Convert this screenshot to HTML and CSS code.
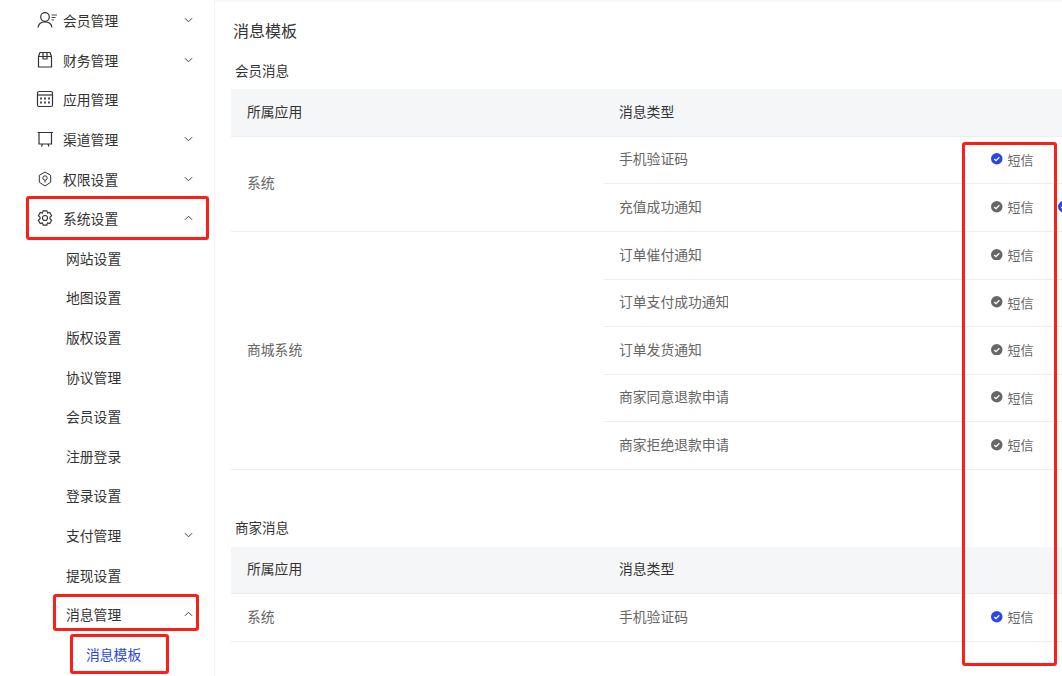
FILE: index.html
```html
<!doctype html>
<html lang="zh-CN">
<head>
    <meta charset="UTF-8">
    <title>消息模板</title>
    <link rel="stylesheet" href="styles.css">
</head>
<body>
    <div class="page">
        <!-- Sidebar -->
        <aside class="sidebar">
            <div class="menu-item">
                <svg class="menu-icon" viewBox="0 0 20 20"><circle cx="9" cy="7" r="4.300"/><path d="M2 17.500c.5-3.500 3.200-5.700 7-5.700s6.500 2.200 7 5.700"/><path class="thin" d="M15.500 5h5.500M15.500 7.500h4M15.500 10h2.500"/></svg>
                <span class="menu-text">会员管理</span>
                <svg class="chevron" viewBox="0 0 10 6"><path d="M1 1l4 4 4-4"/></svg>
            </div>
            <div class="menu-item">
                <svg class="menu-icon" viewBox="0 0 20 20"><path d="M2.500 6.500h13v10.500h-13zM2.500 6.500l1.500-4h10l1.500 4"/><path d="M7 2.500v6.500h4V2.500"/></svg>
                <span class="menu-text">财务管理</span>
                <svg class="chevron" viewBox="0 0 10 6"><path d="M1 1l4 4 4-4"/></svg>
            </div>
            <div class="menu-item">
                <svg class="menu-icon" viewBox="0 0 20 20"><rect x="1.500" y="2.500" width="15" height="15" rx="1.500"/><path d="M1.500 6h15"/><path class="dots" d="M4 9.500h2M8 9.500h2M12 9.500h2M4 13.500h2M8 13.500h2M12 13.500h2"/></svg>
                <span class="menu-text">应用管理</span>
            </div>
            <div class="menu-item">
                <svg class="menu-icon" viewBox="0 0 20 20"><path d="M1.500 3.500h15.500M3 3.500v11.500h12.500V3.500M6.500 15l-1 2.500M12 15l1 2.500"/></svg>
                <span class="menu-text">渠道管理</span>
                <svg class="chevron" viewBox="0 0 10 6"><path d="M1 1l4 4 4-4"/></svg>
            </div>
            <div class="menu-item">
                <svg class="menu-icon thin-icon" viewBox="0 0 20 20"><path d="M9 3l5.700 3.300v6.900L9 17l-5.700-3.800V6.300z"/><circle cx="9" cy="9" r="2.200"/><path d="M9 11.200v2.300"/></svg>
                <span class="menu-text">权限设置</span>
                <svg class="chevron" viewBox="0 0 10 6"><path d="M1 1l4 4 4-4"/></svg>
            </div>
            <div class="menu-item">
                <svg class="menu-icon thin-icon" viewBox="0 0 20 20"><g transform="translate(9 10) scale(1.100) translate(-10 -9.500)"><path d="M8.300 3h3.400l.6 2 2-.6 1.700 3-1.500 1.400v1.400l1.500 1.400-1.700 3-2-.6-.6 2H8.300l-.6-2-2 .6-1.700-3 1.500-1.400V8.800L4 7.400l1.700-3 2 .6z"/><circle cx="10" cy="9.500" r="2.300"/></g></svg>
                <span class="menu-text">系统设置</span>
                <svg class="chevron" viewBox="0 0 10 6"><path d="M1 5l4-4 4 4"/></svg>
            </div>
            <div class="menu-item sub"><span class="menu-text">网站设置</span></div>
            <div class="menu-item sub"><span class="menu-text">地图设置</span></div>
            <div class="menu-item sub"><span class="menu-text">版权设置</span></div>
            <div class="menu-item sub"><span class="menu-text">协议管理</span></div>
            <div class="menu-item sub"><span class="menu-text">会员设置</span></div>
            <div class="menu-item sub"><span class="menu-text">注册登录</span></div>
            <div class="menu-item sub"><span class="menu-text">登录设置</span></div>
            <div class="menu-item sub">
                <span class="menu-text">支付管理</span>
                <svg class="chevron" viewBox="0 0 10 6"><path d="M1 1l4 4 4-4"/></svg>
            </div>
            <div class="menu-item sub"><span class="menu-text">提现设置</span></div>
            <div class="menu-item sub">
                <span class="menu-text">消息管理</span>
                <svg class="chevron" viewBox="0 0 10 6"><path d="M1 5l4-4 4 4"/></svg>
            </div>
            <div class="menu-item sub-sub active"><span class="menu-text">消息模板</span></div>
        </aside>

        <!-- Main Content -->
        <main class="content">
            <h1 class="page-title">消息模板</h1>

            <h2 class="section-title">会员消息</h2>
            <div class="table">
                <div class="table-head">
                    <div class="col-app">所属应用</div>
                    <div class="col-type">消息类型</div>
                </div>
                <div class="table-group">
                    <div class="col-app">系统</div>
                    <div class="group-rows">
                        <div class="row">
                            <div class="row-name">手机验证码</div>
                            <div class="channel on">
                                <svg class="check" viewBox="0 0 12 12"><circle cx="6" cy="6" r="6"/><path d="M3.300 6.300l1.900 1.600 3.500-3.500"/></svg>
                                短信
                            </div>
                        </div>
                        <div class="row">
                            <div class="row-name">充值成功通知</div>
                            <div class="channel">
                                <svg class="check" viewBox="0 0 12 12"><circle cx="6" cy="6" r="6"/><path d="M3.300 6.300l1.900 1.600 3.500-3.500"/></svg>
                                短信
                            </div>
                            <div class="channel on">
                                <svg class="check" viewBox="0 0 12 12"><circle cx="6" cy="6" r="6"/><path d="M3.300 6.300l1.900 1.600 3.500-3.500"/></svg>
                            </div>
                        </div>
                    </div>
                </div>
                <div class="table-group">
                    <div class="col-app">商城系统</div>
                    <div class="group-rows">
                        <div class="row">
                            <div class="row-name">订单催付通知</div>
                            <div class="channel">
                                <svg class="check" viewBox="0 0 12 12"><circle cx="6" cy="6" r="6"/><path d="M3.300 6.300l1.900 1.600 3.500-3.500"/></svg>
                                短信
                            </div>
                        </div>
                        <div class="row">
                            <div class="row-name">订单支付成功通知</div>
                            <div class="channel">
                                <svg class="check" viewBox="0 0 12 12"><circle cx="6" cy="6" r="6"/><path d="M3.300 6.300l1.900 1.600 3.500-3.500"/></svg>
                                短信
                            </div>
                        </div>
                        <div class="row">
                            <div class="row-name">订单发货通知</div>
                            <div class="channel">
                                <svg class="check" viewBox="0 0 12 12"><circle cx="6" cy="6" r="6"/><path d="M3.300 6.300l1.900 1.600 3.500-3.500"/></svg>
                                短信
                            </div>
                        </div>
                        <div class="row">
                            <div class="row-name">商家同意退款申请</div>
                            <div class="channel">
                                <svg class="check" viewBox="0 0 12 12"><circle cx="6" cy="6" r="6"/><path d="M3.300 6.300l1.900 1.600 3.500-3.500"/></svg>
                                短信
                            </div>
                        </div>
                        <div class="row">
                            <div class="row-name">商家拒绝退款申请</div>
                            <div class="channel">
                                <svg class="check" viewBox="0 0 12 12"><circle cx="6" cy="6" r="6"/><path d="M3.300 6.300l1.900 1.600 3.500-3.500"/></svg>
                                短信
                            </div>
                        </div>
                    </div>
                </div>
            </div>

            <h2 class="section-title second">商家消息</h2>
            <div class="table">
                <div class="table-head">
                    <div class="col-app">所属应用</div>
                    <div class="col-type">消息类型</div>
                </div>
                <div class="table-group">
                    <div class="col-app">系统</div>
                    <div class="group-rows">
                        <div class="row">
                            <div class="row-name">手机验证码</div>
                            <div class="channel on">
                                <svg class="check" viewBox="0 0 12 12"><circle cx="6" cy="6" r="6"/><path d="M3.300 6.300l1.900 1.600 3.500-3.500"/></svg>
                                短信
                            </div>
                        </div>
                    </div>
                </div>
            </div>
        </main>

        <!-- Red annotation boxes drawn over the screenshot -->
        <div class="mark mark-system"></div>
        <div class="mark mark-message"></div>
        <div class="mark mark-template"></div>
        <div class="mark mark-channels"></div>
    </div>
</body>
</html>
```

FILE: styles.css
```css
* {
    margin: 0;
    padding: 0;
    box-sizing: border-box;
}

html, body {
    height: 100%;
    overflow: hidden;
}

body {
    font-family: "Noto Sans CJK SC", "Liberation Sans", sans-serif;
    background-color: #fff;
    color: #333;
    font-size: 13.8px;
}

.page {
    position: relative;
    display: flex;
    width: 1062px;
    height: 676px;
    overflow: hidden;
}

/* Sidebar */
.sidebar {
    flex: none;
    width: 215px;
    padding-top: 0.5px;
    border-right: 1px solid #f0f3f8;
}

.menu-item {
    display: flex;
    align-items: center;
    height: 39.6px;
    padding-left: 36px;
    padding-right: 21px;
    color: #333;
}

.menu-icon {
    flex: none;
    width: 20px;
    height: 20px;
    margin-right: 7px;
    overflow: visible;
    fill: none;
    stroke: #333;
    stroke-width: 1.2;
}

.thin-icon {
    stroke-width: 1;
}

.menu-icon .thin {
    stroke-width: 0.9;
}

.menu-icon .dots {
    stroke: #4a4a6a;
    stroke-width: 2;
}

.menu-text {
    flex: 1;
}

.chevron {
    flex: none;
    width: 9px;
    height: 6px;
    fill: none;
    stroke: #444;
    stroke-width: 1.1;
}

.sub {
    padding-left: 66px;
}

.sub-sub {
    padding-left: 86px;
}

.active {
    color: #2a46e8;
}

/* Main content */
.content {
    flex: none;
    width: 847px;
    padding: 0 0 0 16px;
    border-top: 2px solid #f5f8fb;
}

.page-title {
    padding-left: 2px;
    margin-top: 16px;
    font-size: 16px;
    font-weight: normal;
    line-height: 24px;
    color: #333;
}

.section-title {
    padding-left: 4px;
    margin-top: 18px;
    margin-bottom: 9px;
    font-size: 13.5px;
    font-weight: normal;
    line-height: 20px;
    color: #333;
}

.section-title.second {
    margin-top: 46.5px;
    margin-bottom: 10px;
}

.table {
    width: 850px;
}

.table-head {
    display: flex;
    align-items: center;
    height: 47.5px;
    background-color: #f5f6f8;
    border-bottom: 1px solid #eceef5;
    color: #333;
}

.col-app {
    flex: none;
    width: 373px;
    padding-left: 16px;
    padding-bottom: 3px;
}

.col-type {
    padding-left: 15px;
    padding-bottom: 3px;
}

.table-group {
    display: flex;
    align-items: center;
    border-bottom: 1px solid #eceef5;
    color: #666;
}

.group-rows {
    flex: 1;
}

.row {
    display: flex;
    align-items: center;
    height: 47.5px;
    border-bottom: 1px solid #eceef5;
}

.row:last-child {
    height: 47px;
    border-bottom: none;
}

.row-name {
    flex: none;
    width: 124px;
    padding-left: 15px;
    padding-bottom: 3px;
    white-space: nowrap;
    overflow: hidden;
}

.channel {
    display: flex;
    align-items: center;
    flex: none;
    width: 67px;
    padding-bottom: 1.5px;
    white-space: nowrap;
    font-size: 13px;
    color: #666;
}

.row-name + .channel {
    margin-left: 263px;
}

.check {
    flex: none;
    width: 11.5px;
    height: 11.5px;
    margin-right: 5px;
    fill: #666;
    stroke: none;
}

.check path {
    fill: none;
    stroke: #fff;
    stroke-width: 1.3;
}

.channel.on .check {
    fill: #2a46e8;
}

/* Red annotation boxes */
.mark {
    position: absolute;
    border: 3px solid #fb1f17;
    border-radius: 3px;
}

.mark-system {
    left: 26px;
    top: 196px;
    width: 183px;
    height: 44px;
}

.mark-message {
    left: 53px;
    top: 594px;
    width: 146px;
    height: 37px;
}

.mark-template {
    left: 70px;
    top: 634px;
    width: 99px;
    height: 40px;
}

.mark-channels {
    left: 962px;
    top: 142px;
    width: 95px;
    height: 524px;
}
```
